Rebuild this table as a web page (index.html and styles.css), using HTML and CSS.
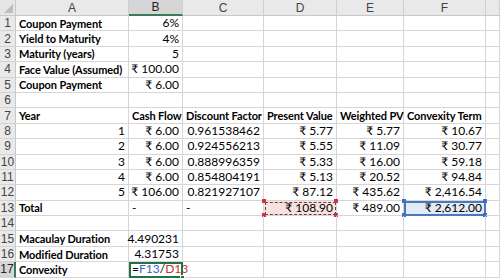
FILE: index.html
```html
<!DOCTYPE html>
<html>
<head>
<meta charset="utf-8">
<link rel="stylesheet" href="styles.css">
</head>
<body>
<div class="sheet">
  <div class="corner"><span class="tri"></span></div>
  <div class="ch">A</div><div class="ch ch-active">B</div><div class="ch">C</div><div class="ch">D</div><div class="ch">E</div><div class="ch">F</div><div class="ch"></div>

  <div class="rh">1</div><div class="c b">Coupon Payment</div><div class="c r">6%</div><div class="c"></div><div class="c"></div><div class="c"></div><div class="c"></div><div class="c"></div>
  <div class="rh">2</div><div class="c b">Yield to Maturity</div><div class="c r">4%</div><div class="c"></div><div class="c"></div><div class="c"></div><div class="c"></div><div class="c"></div>
  <div class="rh">3</div><div class="c b">Maturity (years)</div><div class="c r">5</div><div class="c"></div><div class="c"></div><div class="c"></div><div class="c"></div><div class="c"></div>
  <div class="rh">4</div><div class="c b">Face Value (Assumed)</div><div class="c r">₹ 100.00</div><div class="c"></div><div class="c"></div><div class="c"></div><div class="c"></div><div class="c"></div>
  <div class="rh">5</div><div class="c b">Coupon Payment</div><div class="c r">₹ 6.00</div><div class="c"></div><div class="c"></div><div class="c"></div><div class="c"></div><div class="c"></div>
  <div class="rh">6</div><div class="c"></div><div class="c"></div><div class="c"></div><div class="c"></div><div class="c"></div><div class="c"></div><div class="c"></div>
  <div class="rh">7</div><div class="c b">Year</div><div class="c b">Cash Flow</div><div class="c b">Discount Factor</div><div class="c b">Present Value</div><div class="c b">Weighted PV</div><div class="c b">Convexity Term</div><div class="c"></div>
  <div class="rh">8</div><div class="c r">1</div><div class="c r">₹ 6.00</div><div class="c r">0.961538462</div><div class="c r">₹ 5.77</div><div class="c r">₹ 5.77</div><div class="c r">₹ 10.67</div><div class="c"></div>
  <div class="rh">9</div><div class="c r">2</div><div class="c r">₹ 6.00</div><div class="c r">0.924556213</div><div class="c r">₹ 5.55</div><div class="c r">₹ 11.09</div><div class="c r">₹ 30.77</div><div class="c"></div>
  <div class="rh">10</div><div class="c r">3</div><div class="c r">₹ 6.00</div><div class="c r">0.888996359</div><div class="c r">₹ 5.33</div><div class="c r">₹ 16.00</div><div class="c r">₹ 59.18</div><div class="c"></div>
  <div class="rh">11</div><div class="c r">4</div><div class="c r">₹ 6.00</div><div class="c r">0.854804191</div><div class="c r">₹ 5.13</div><div class="c r">₹ 20.52</div><div class="c r">₹ 94.84</div><div class="c"></div>
  <div class="rh">12</div><div class="c r">5</div><div class="c r">₹ 106.00</div><div class="c r">0.821927107</div><div class="c r">₹ 87.12</div><div class="c r">₹ 435.62</div><div class="c r">₹ 2,416.54</div><div class="c"></div>
  <div class="rh">13</div><div class="c b">Total</div><div class="c">-</div><div class="c">-</div><div class="c r copy">₹ 108.90<span class="h h-tl"></span><span class="h h-tr"></span><span class="h h-bl"></span><span class="h h-br"></span></div><div class="c r">₹ 489.00</div><div class="c r sel">₹ 2,612.00<span class="q q-tl"></span><span class="q q-tr"></span><span class="q q-bl"></span><span class="q q-br"></span></div><div class="c"></div>
  <div class="rh">14</div><div class="c"></div><div class="c"></div><div class="c"></div><div class="c"></div><div class="c"></div><div class="c"></div><div class="c"></div>
  <div class="rh">15</div><div class="c b">Macaulay Duration</div><div class="c r">4.490231</div><div class="c"></div><div class="c"></div><div class="c"></div><div class="c"></div><div class="c"></div>
  <div class="rh">16</div><div class="c b">Modified Duration</div><div class="c r">4.31753</div><div class="c"></div><div class="c"></div><div class="c"></div><div class="c"></div><div class="c"></div>
  <div class="rh rh-active">17</div><div class="c b">Convexity</div><div class="c active">=<span class="ref1">F13</span>/<span class="ref2">D13</span><span class="fill"></span></div><div class="c"></div><div class="c"></div><div class="c"></div><div class="c"></div><div class="c"></div>
</div>
</body>
</html>
```
FILE: styles.css
```css
html, body {
  margin: 0;
  padding: 0;
  background: #ffffff;
}
body {
  font-family: Lato, "Noto Sans", "DejaVu Sans", sans-serif;
  font-size: 12px;
  color: #000;
  overflow: hidden;
}
.sheet {
  display: grid;
  grid-template-columns: 16px 113px 54px 81px 73px 67px 82px 14px;
  grid-template-rows: 16px repeat(17, 15.4px);
  width: 500px;
}
.corner {
  background: #e6e6e6;
  border-right: 1px solid #c8c8c8;
  border-bottom: 1px solid #c8c8c8;
  position: relative;
}
.tri {
  position: absolute;
  right: 2px;
  bottom: 2px;
  width: 0;
  height: 0;
  border-left: 9px solid transparent;
  border-bottom: 9px solid #bcbcbc;
}
.ch {
  background: #e9e9e9;
  border-right: 1px solid #cfcfcf;
  border-bottom: 1px solid #c8c8c8;
  color: #444;
  font-family: "Liberation Sans", Arial, sans-serif;
  font-size: 12px;
  display: flex;
  align-items: center;
  justify-content: center;
}
.ch-active {
  background: #d6d6d6;
  border-bottom: 2px solid #3e7a58;
  color: #222;
}
.rh {
  background: #e9e9e9;
  border-right: 1px solid #c8c8c8;
  border-bottom: 1px solid #d4d4d4;
  color: #444;
  font-family: "Liberation Sans", Arial, sans-serif;
  font-size: 12px;
  display: flex;
  align-items: center;
  justify-content: center;
}
.rh-active {
  background: #d6d6d6;
  border-right: 2px solid #3e7a58;
  color: #222;
}
.c {
  border-right: 1px solid #d6d6d6;
  border-bottom: 1px solid #d6d6d6;
  display: flex;
  align-items: center;
  padding: 0 3px;
  white-space: nowrap;
  overflow: visible;
  position: relative;
  line-height: 1;
}
.b {
  font-weight: 700;
  font-size: 11px;
  letter-spacing: -0.1px;
}
.r {
  justify-content: flex-end;
}
.copy {
  background: #f6e3e1;
  outline: 1px dashed #7a3a30;
  outline-offset: -2px;
}
.h {
  position: absolute;
  width: 4px;
  height: 4px;
  background: #c8364a;
}
.h-tl { left: -2px; top: -2px; }
.h-tr { right: -2px; top: -2px; }
.h-bl { left: -2px; bottom: -2px; }
.h-br { right: -2px; bottom: -2px; }
.sel {
  background: #e3ebf6;
  outline: 2px solid #4a78c0;
  outline-offset: -2px;
}
.q {
  position: absolute;
  width: 4px;
  height: 4px;
  background: #3f6fbf;
}
.q-tl { left: -2px; top: -2px; }
.q-tr { right: -2px; top: -2px; }
.q-bl { left: -2px; bottom: -2px; }
.q-br { right: -2px; bottom: -2px; }
.active {
  outline: 2px solid #217346;
  outline-offset: -2px;
  z-index: 2;
}
.ref1 { color: #3a64c8; }
.ref2 { color: #c0392b; }
.fill {
  position: absolute;
  right: -3px;
  bottom: -3px;
  width: 5px;
  height: 5px;
  background: #217346;
  border: 1px solid #fff;
  box-sizing: border-box;
}
```
